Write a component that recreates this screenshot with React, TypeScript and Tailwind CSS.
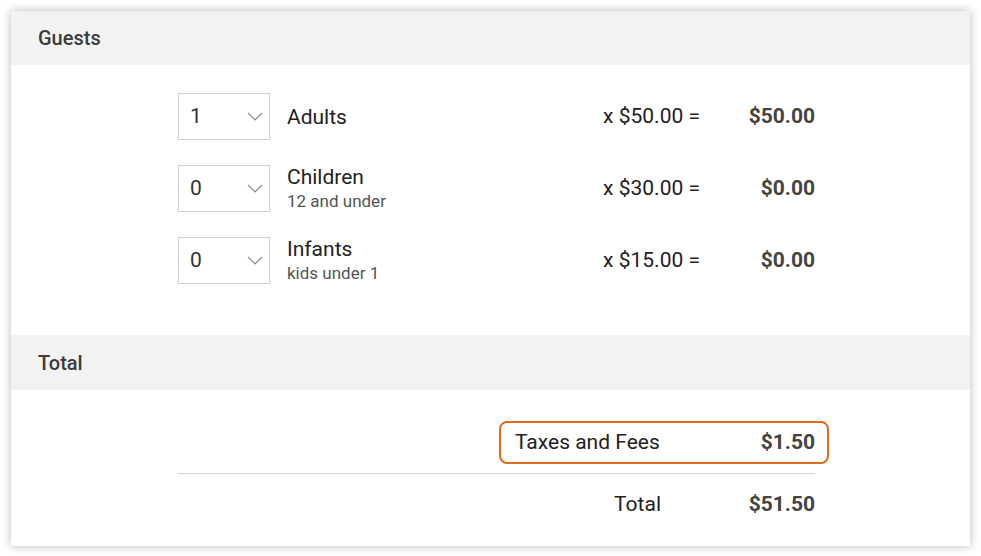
const guests = [
  { count: 1, label: 'Adults', sub: '', price: '$50.00', amount: '$50.00' },
  { count: 0, label: 'Children', sub: '12 and under', price: '$30.00', amount: '$0.00' },
  { count: 0, label: 'Infants', sub: 'kids under 1', price: '$15.00', amount: '$0.00' }
]

function Chevron() {
  return (
    <svg width="16" height="9" viewBox="0 0 16 9" fill="none" className="text-[#8a8a8a]">
      <path d="M1 1l7 7 7-7" stroke="currentColor" strokeWidth="1.1" />
    </svg>
  )
}

export default function App() {
  return (
    <div
      className="bg-white px-[11px] pt-[11px] pb-[10px]"
      style={{ fontFamily: 'Roboto, "Liberation Sans", sans-serif' }}
    >
      <div className="h-[535px] bg-white shadow-[0_0_9px_rgba(0,0,0,0.28)]">
        {/* Guests */}
        <div className="flex h-[54px] items-center bg-[#f2f2f2] px-[27px] text-[20px] font-medium text-[#3b3b3b]">
          Guests
        </div>
        <div className="flex flex-col gap-[25px] pt-[28px] pb-[51px] pl-[167px] pr-[155px]">
          {guests.map((g) => (
            <div key={g.label} className="flex h-[47px] items-center">
              <div className="flex h-[47px] w-[92px] items-center justify-between border border-[#cfcfcf] pl-[11px] pr-[6px] text-[21px] text-[#333]">
                <span>{g.count}</span>
                <Chevron />
              </div>
              <div className="ml-[17px] flex flex-1 flex-col">
                <span className="text-[21px] leading-[24px] text-[#222]">{g.label}</span>
                {g.sub && <span className="mt-[2px] text-[17px] leading-[21px] text-[#555]">{g.sub}</span>}
              </div>
              <div className="text-right text-[21px] text-[#222]">x {g.price} =</div>
              <div className="w-[115px] text-right text-[21px] font-bold text-[#444]">{g.amount}</div>
            </div>
          ))}
        </div>

        {/* Total */}
        <div className="flex h-[55px] items-center bg-[#f2f2f2] px-[27px] text-[20px] font-medium text-[#3b3b3b]">
          Total
        </div>
        <div className="pt-[31px] pl-[167px] pr-[155px]">
          <div className="flex justify-end">
            <div className="-mr-[14px] flex h-[43px] w-[330px] items-center justify-between rounded-[8px] border-2 border-[#e2691c] pl-[14px] pr-[12px] text-[21px]">
              <span className="text-[#222]">Taxes and Fees</span>
              <span className="font-bold text-[#444]">$1.50</span>
            </div>
          </div>
          <div className="mt-[9px] border-t border-[#d4d4d4]" />
          <div className="mt-[15px] flex justify-end text-[21px]">
            <span className="text-[#222]">Total</span>
            <span className="w-[154px] text-right font-bold text-[#444]">$51.50</span>
          </div>
        </div>
      </div>
    </div>
  )
}
